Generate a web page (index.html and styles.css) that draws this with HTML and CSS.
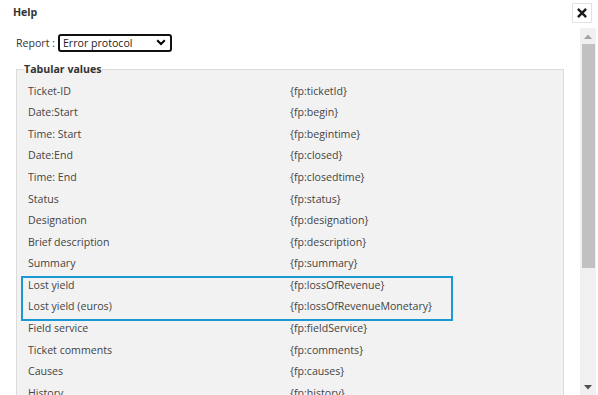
FILE: index.html
```html
<!DOCTYPE html>
<html>
<head>
<meta charset="utf-8">
<link rel="stylesheet" href="styles.css">
</head>
<body>
<div class="dialog">
  <header class="titlebar">
    <span class="title">Help</span>
    <button class="close" type="button" aria-label="Close">
      <svg width="10" height="10" viewBox="0 0 10 10"><path d="M1.8 1.8 L8.2 8.2 M8.2 1.8 L1.8 8.2" stroke="#1a1a1a" stroke-width="2.4" stroke-linecap="square"/></svg>
    </button>
  </header>
  <div class="body">
    <div class="content">
      <div class="report-row">
        <span class="report-label">Report :</span>
        <div class="select">
          <span>Error protocol</span>
          <svg class="chev" width="10" height="7" viewBox="0 0 10 7"><path d="M1.2 1.3 L5 5 L8.8 1.3" fill="none" stroke="#000" stroke-width="2"/></svg>
        </div>
      </div>
      <fieldset class="values">
        <legend>Tabular values</legend>
        <div class="row"><span>Ticket-ID</span><span>{fp:ticketId}</span></div>
        <div class="row"><span>Date:Start</span><span>{fp:begin}</span></div>
        <div class="row"><span>Time: Start</span><span>{fp:begintime}</span></div>
        <div class="row"><span>Date:End</span><span>{fp:closed}</span></div>
        <div class="row"><span>Time: End</span><span>{fp:closedtime}</span></div>
        <div class="row"><span>Status</span><span>{fp:status}</span></div>
        <div class="row"><span>Designation</span><span>{fp:designation}</span></div>
        <div class="row"><span>Brief description</span><span>{fp:description}</span></div>
        <div class="row"><span>Summary</span><span>{fp:summary}</span></div>
        <div class="group">
          <div class="row"><span>Lost yield</span><span>{fp:lossOfRevenue}</span></div>
          <div class="row"><span>Lost yield (euros)</span><span>{fp:lossOfRevenueMonetary}</span></div>
        </div>
        <div class="row"><span>Field service</span><span>{fp:fieldService}</span></div>
        <div class="row"><span>Ticket comments</span><span>{fp:comments}</span></div>
        <div class="row"><span>Causes</span><span>{fp:causes}</span></div>
        <div class="row"><span>History</span><span>{fp:history}</span></div>
      </fieldset>
    </div>
    <div class="scrollbar">
      <div class="arrow up"><svg width="8" height="5" viewBox="0 0 8 5"><path d="M0 5 L4 0.5 L8 5 Z" fill="#a3a3a3"/></svg></div>
      <div class="track"><div class="thumb"></div></div>
      <div class="arrow down"><svg width="8" height="5" viewBox="0 0 8 5"><path d="M0 0 L4 4.5 L8 0 Z" fill="#505050"/></svg></div>
    </div>
  </div>
</div>
</body>
</html>
```
FILE: styles.css
```css
* { box-sizing: border-box; }
html, body { margin: 0; padding: 0; background: #fff; }
body {
  width: 598px;
  height: 395px;
  overflow: hidden;
  font-family: "Open Sans", "Noto Sans", sans-serif;
  font-size: 10.6px;
  color: #444;
}
.dialog {
  display: flex;
  flex-direction: column;
  height: 395px;
}
.titlebar {
  height: 28px;
  display: flex;
  align-items: flex-start;
  justify-content: space-between;
  padding: 0 6px 0 13px;
}
.title {
  font-weight: 700;
  color: #333;
  margin-top: 4px;
  line-height: 16px;
}
.close {
  margin-top: 3px;
  width: 20px;
  height: 20px;
  border: 1px solid #e2e2e2;
  background: #fff;
  padding: 0;
  display: flex;
  align-items: center;
  justify-content: center;
}
.body {
  flex: 1;
  display: flex;
  min-height: 0;
}
.content {
  flex: 1;
  overflow: hidden;
  padding-top: 5px;
}
.report-row {
  display: flex;
  align-items: center;
  padding-left: 16px;
  gap: 3px;
  height: 19px;
}
.report-label { color: #333; }
.select {
  width: 114px;
  height: 18px;
  border: 2px solid #111;
  border-radius: 3px;
  display: flex;
  align-items: center;
  justify-content: space-between;
  padding: 0 3px 0 3px;
  color: #222;
}
.chev { margin-right: 1px; }
.values {
  margin: 10px 16px 0 16px;
  padding: 0;
  border: 1px solid #dcdcdc;
  background: #f2f2f2;
}
.values legend {
  font-weight: 700;
  color: #333;
  padding: 0;
  margin-left: 7px;
  line-height: 14px;
}
.values > .row:first-of-type { margin-top: 4px; }
.row {
  display: grid;
  grid-template-columns: 262px 1fr;
  padding-left: 11px;
  height: 21.57px;
  align-items: center;
}
.group {
  position: relative;
}
.group::after {
  content: "";
  position: absolute;
  left: 4px;
  top: 2px;
  width: 428px;
  height: 41px;
  border: 2px solid #1b99d4;
  pointer-events: none;
}
.scrollbar {
  width: 16px;
  margin-right: 2px;
  background: #f0f0f0;
  display: flex;
  flex-direction: column;
}
.arrow {
  height: 16px;
  display: flex;
  align-items: center;
  justify-content: center;
}
.track {
  flex: 1;
  display: flex;
  flex-direction: column;
}
.thumb {
  height: 224px;
  margin: 0 1px 0 2px;
  background: #c1c1c1;
}
```
